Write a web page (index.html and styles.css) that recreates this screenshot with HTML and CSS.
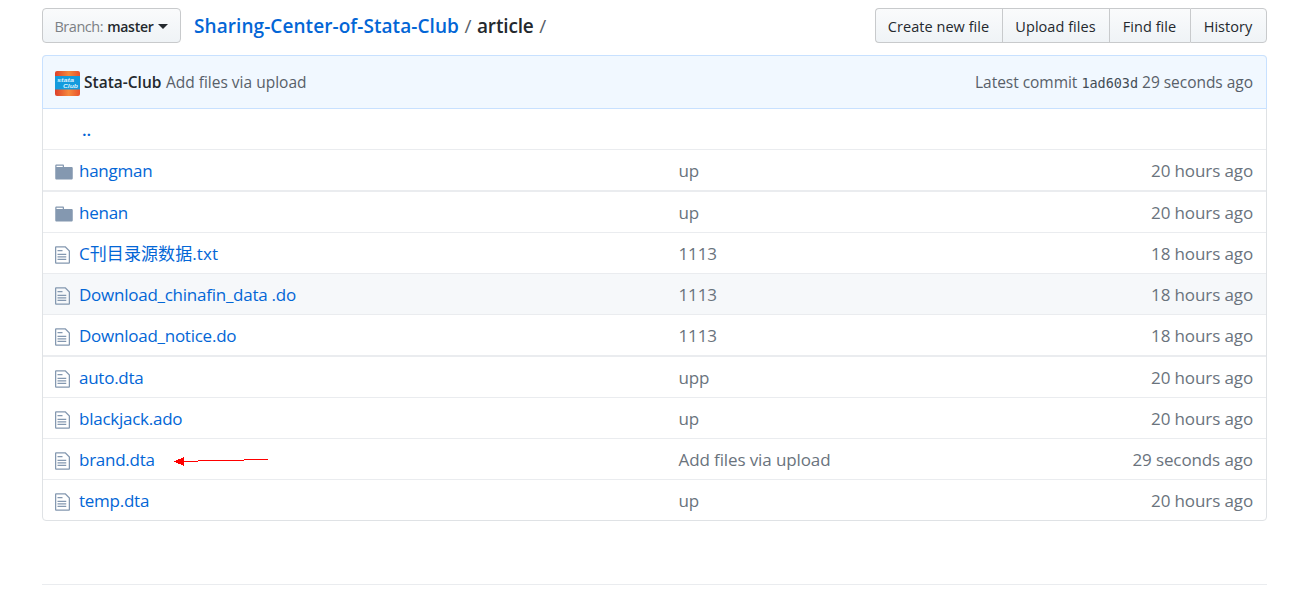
FILE: index.html
```html
<!DOCTYPE html>
<html lang="en">
<head>
<meta charset="utf-8">
<title>Sharing-Center-of-Stata-Club/article</title>
<link rel="stylesheet" href="styles.css">
</head>
<body>
<svg class="defs" aria-hidden="true">
  <symbol id="folder" viewBox="0 0 14 16"><path fill-rule="evenodd" d="M13 4H7V3c0-.66-.31-1-1-1H1c-.55 0-1 .45-1 1v10c0 .55.45 1 1 1h12c.55 0 1-.45 1-1V5c0-.55-.45-1-1-1zM6 4H1V3h5v1z"/></symbol>
  <symbol id="file" viewBox="0 0 12 16"><path fill-rule="evenodd" d="M6 5H2V4h4v1zM2 8h7V7H2v1zm0 2h7V9H2v1zm0 2h7v-1H2v1zm10-7.500V14c0 .55-.45 1-1 1H1c-.55 0-1-.45-1-1V2c0-.55.45-1 1-1h7.500L12 4.500zM11 5L8 2H1v12h10V5z"/></symbol>
</svg>
<main class="page">
  <div class="toolbar">
    <button class="btn branch"><span class="branch-label">Branch:</span> <span class="branch-name">master</span><i class="caret"></i></button>
    <div class="crumbs"><a class="repo">Sharing-Center-of-Stata-Club</a><span class="sep">/</span><strong class="current">article</strong><span class="sep">/</span></div>
    <div class="group">
      <button class="btn create"><span>Create new file</span></button><button class="btn upload"><span>Upload files</span></button><button class="btn find"><span>Find file</span></button><button class="btn history"><span>History</span></button>
    </div>
  </div>
  <section class="panel">
    <header class="commit">
      <svg class="avatar" viewBox="0 0 25 25">
        <defs><linearGradient id="flame"><stop offset="0" stop-color="#dc3f2a"/><stop offset=".55" stop-color="#f6893c"/><stop offset="1" stop-color="#e8502c"/></linearGradient></defs>
        <rect width="25" height="25" rx="2" fill="url(#flame)"/>
        <rect y="5" width="25" height="13.500" fill="#149bdd"/>
        <text class="logo-text" x="2" y="11" textLength="17" lengthAdjust="spacingAndGlyphs">stata</text>
        <text class="logo-text" x="8" y="16.500" textLength="15" lengthAdjust="spacingAndGlyphs">Club</text>
      </svg>
      <strong class="author">Stata-Club</strong><span class="message">Add files via upload</span>
      <span class="latest">Latest commit <code>1ad603d</code> 29 seconds ago</span>
    </header>
    <div class="row up"><a>..</a></div>
    <div class="row"><svg class="folder"><use href="#folder"/></svg><a>hangman</a><span class="note">up</span><time>20 hours ago</time></div>
    <div class="row thick"><svg class="folder"><use href="#folder"/></svg><a>henan</a><span class="note">up</span><time>20 hours ago</time></div>
    <div class="row"><svg class="file"><use href="#file"/></svg><a class="cjk">C刊目录源数据.txt</a><span class="note">1113</span><time>18 hours ago</time></div>
    <div class="row hover"><svg class="file"><use href="#file"/></svg><a>Download_chinafin_data .do</a><span class="note">1113</span><time>18 hours ago</time></div>
    <div class="row"><svg class="file"><use href="#file"/></svg><a>Download_notice.do</a><span class="note">1113</span><time>18 hours ago</time></div>
    <div class="row thick"><svg class="file"><use href="#file"/></svg><a>auto.dta</a><span class="note">upp</span><time>20 hours ago</time></div>
    <div class="row"><svg class="file"><use href="#file"/></svg><a>blackjack.ado</a><span class="note">up</span><time>20 hours ago</time></div>
    <div class="row"><svg class="file"><use href="#file"/></svg><a>brand.dta</a><span class="note">Add files via upload</span><time>29 seconds ago</time>
      <svg class="arrow" viewBox="0 0 94 10" shape-rendering="crispEdges"><path d="M0 5.500 10 1v9zM10 5h14v1H10zM24 4h46v1H24zM70 3h24v1H70z"/></svg></div>
    <div class="row"><svg class="file"><use href="#file"/></svg><a>temp.dta</a><span class="note">up</span><time>20 hours ago</time></div>
  </section>
  <hr class="rule">
</main>
</body>
</html>
```
FILE: styles.css
```css
* { box-sizing: border-box; }
body { margin: 0; background: #fff; color: #24292e; font-family: "Open Sans", "Noto Sans CJK SC", sans-serif; font-size: 17px; white-space: nowrap; }
.defs { position: absolute; width: 0; height: 0; }
.page { width: 1225px; margin-left: 42px; padding-top: 8px; }
.toolbar { display: flex; height: 35px; margin-bottom: 12px; }
.btn { display: flex; align-items: center; justify-content: center; height: 35px; margin: 0; padding: 1px 0 0; border: 1px solid #c8cacc; border-radius: 4px; background: linear-gradient(#fafbfc, #eff3f6); color: #24292e; font: 500 14.500px "Open Sans", sans-serif; }
.branch { width: 139px; gap: 4px; padding-right: 1px; letter-spacing: -.45px; }
.branch-name { font-weight: 600; font-size: 14px; letter-spacing: -.25px; }
.branch-label { font-weight: 400; color: #7c8084; }
.caret { border: 5px solid transparent; border-top-color: #24292e; border-bottom: 0; }
.crumbs { display: flex; align-items: center; margin-left: 13px; padding-top: 1px; font-size: 19px; }
.repo, .current { font-weight: 600; }
.repo { letter-spacing: .07px; }
.current { letter-spacing: -.15px; }
.repo, .row a { color: #0366d6; }
.sep { margin: 0 5.500px; color: #586069; }
.group { display: flex; margin-left: auto; }
.group .btn { padding-right: 1px; border-radius: 0; border-right-width: 0; letter-spacing: .04px; }
.group .create { width: 127px; border-radius: 4px 0 0 4px; }
.group .upload { width: 107px; }
.group .find { width: 81px; }
.group .history { width: 77px; border-right-width: 1px; border-radius: 0 4px 4px 0; }
.panel { border: 1px solid #dfe2e5; border-radius: 4px; }
.commit { display: flex; align-items: center; height: 54px; margin: -1px -1px 0; padding: 0 13px 0 12px; border: 1px solid #c8e1ff; border-radius: 4px 4px 0 0; background: #f1f8ff; font-size: 15.500px; color: #586069; }
.avatar { width: 25px; height: 25px; margin: 2px 4px 0 0; }
.logo-text { font: italic 700 6px "Liberation Sans", sans-serif; fill: #d9f1fd; }
.author { margin-right: 4.500px; font-weight: 600; color: #24292e; }
.latest { margin-left: auto; letter-spacing: -.03px; }
.latest code { font: 13.500px "DejaVu Sans Mono", monospace; color: #444d56; }
.row { position: relative; display: grid; grid-template-columns: 24px 600px 1fr auto; align-items: center; height: 41px; padding: 0 13px 0 12px; border-top: 1px solid #eaecef; }
.row a { letter-spacing: -.25px; }
.row a.cjk { padding-bottom: 2px; letter-spacing: .08px; }
.row.up { height: 40px; padding-left: 39px; border-top: 0; }
.row.up a { font-weight: 600; }
.row.thick { height: 42px; border-top-width: 2px; }
.row.hover { background: #f6f8fa; }
.row svg { fill: #8498b0; }
.folder { width: 18px; height: 20px; margin-top: 3px; }
.file { width: 15px; height: 20px; margin-top: 3px; }
.note, .row time { color: #6a737d; letter-spacing: -.11px; }
.note { margin-left: -.5px; }
.row .arrow { position: absolute; left: 131px; top: 17px; width: 94px; height: 10px; fill: #f00; }
.rule { height: 1px; margin: 63px 0 0; border: 0; background: #eaecef; }
```
